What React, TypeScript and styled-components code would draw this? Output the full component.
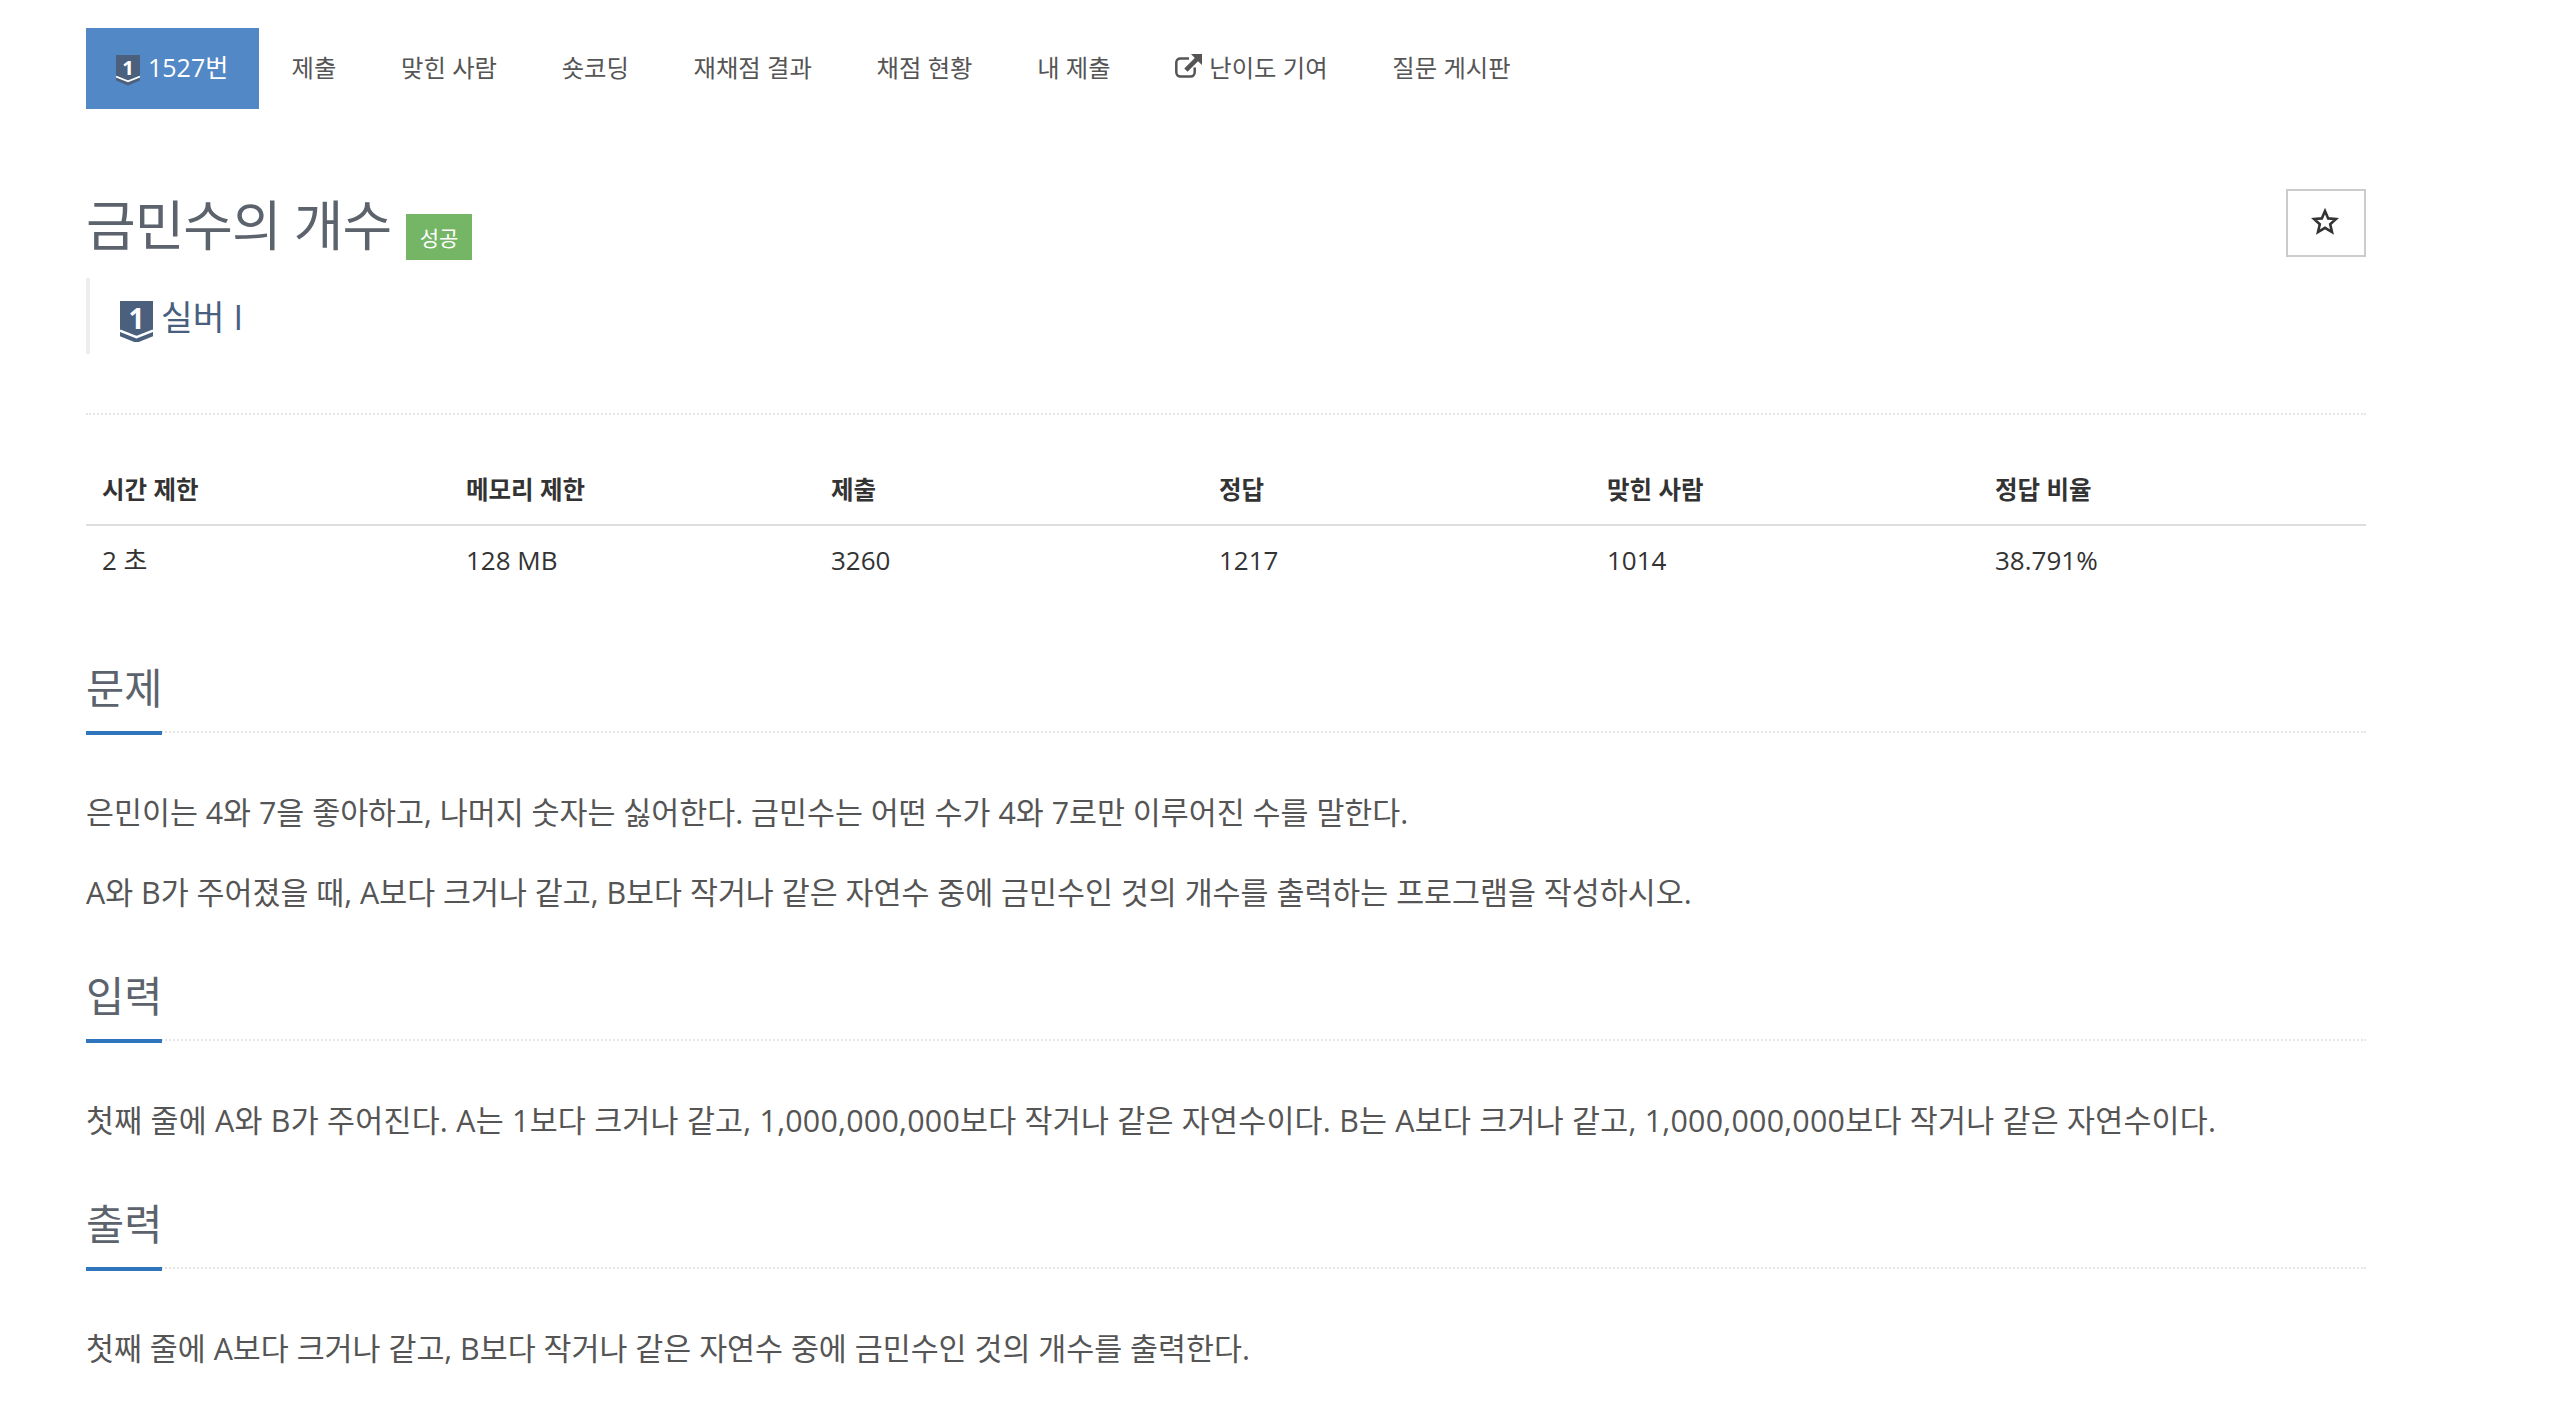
import React from "react";
import styled, { createGlobalStyle } from "styled-components";

const Global = createGlobalStyle`
  html, body { margin: 0; padding: 0; background: #fff; }
  body { font-family: "Open Sans", "Noto Sans CJK KR", sans-serif; color: #555; }
  * { box-sizing: border-box; }
`;

const Page = styled.div`
  width: 2574px;
  height: 1408px;
  overflow: hidden;
  padding: 28px 208px 0 86px;
`;

const Tabs = styled.nav`
  display: flex;
  height: 81px;
  align-items: stretch;
`;

const Tab = styled.a<{ $active?: boolean }>`
  display: flex;
  align-items: center;
  gap: 8px;
  padding: ${(p) => (p.$active ? "0 31px 5px 32px" : "0 32.35px 5px")};
  font-size: ${(p) => (p.$active ? 25 : 24.35)}px;
  color: ${(p) => (p.$active ? "#fff" : "#555")};
  background: ${(p) => (p.$active ? "#5388c6" : "transparent")};
`;

const TitleRow = styled.div`
  display: flex;
  justify-content: space-between;
  align-items: flex-start;
  margin-top: 80px;
`;

const TitleGroup = styled.div`
  display: flex;
  align-items: center;
  gap: 15px;
  height: 72px;
`;

const Title = styled.h1`
  margin: 0;
  font-size: 54px;
  font-weight: 400;
  line-height: 72px;
  letter-spacing: -1px;
  color: #5c636d;
`;

const Badge = styled.span`
  display: flex;
  align-items: center;
  justify-content: center;
  width: 66px;
  height: 46px;
  margin-top: 24px;
  font-size: 21px;
  color: #fff;
  background: #74b566;
`;

const StarButton = styled.button`
  display: flex;
  align-items: center;
  justify-content: center;
  width: 80px;
  height: 68px;
  padding: 0 2px 4px 0;
  background: #fff;
  border: 2px solid #ccc;
`;

const Tier = styled.blockquote`
  display: flex;
  align-items: center;
  gap: 8px;
  height: 76px;
  margin: 17px 0 0;
  padding: 0 0 2px 30px;
  border-left: 4px solid #eee;
  font-size: 34.5px;
  color: #47607f;
`;

const Rule = styled.hr`
  height: 0;
  margin: 59px 0 0;
  border: 0;
  border-top: 2px dotted #e6e6e6;
`;

const Table = styled.div`
  display: grid;
  grid-template-columns: 364px 365px 388px 388px 388px 387px;
  margin-top: 35px;
  color: #333;
`;

const HeadCell = styled.div`
  height: 76px;
  padding: 24px 16px 0;
  font-size: 24.5px;
  font-weight: 700;
  line-height: 32px;
  border-bottom: 2px solid #ddd;
`;

const BodyCell = styled.div`
  height: 72px;
  padding: 18px 16px 0;
  font-size: 26px;
  line-height: 32px;
`;

const Section = styled.section<{ $top: number }>`
  margin-top: ${(p) => p.$top}px;
`;

const SectionHead = styled.div`
  height: 72px;
  border-bottom: 2px dotted #e6e6e6;
`;

const SectionTitle = styled.h2`
  display: inline-block;
  height: 74px;
  margin: 0;
  font-size: 41.5px;
  font-weight: 400;
  line-height: 54px;
  color: #5c636d;
  border-bottom: 4px solid #2f75bd;
`;

const SectionBody = styled.div`
  margin-top: 25px;
`;

const Para = styled.p<{ $track?: number }>`
  margin: 0;
  padding-top: 31px;
  height: 80px;
  font-size: 30.4px;
  line-height: 48px;
  letter-spacing: ${(p) => p.$track ?? 0}px;
  white-space: nowrap;
  color: #555;
`;

const ShieldBox = styled.span<{ $w: number; $top: number; $left: number }>`
  position: relative;
  flex: none;
  display: block;
  width: ${(p) => p.$w}px;
  height: ${(p) => p.$w * 1.27}px;
  margin: ${(p) => p.$top}px 0 0 ${(p) => p.$left}px;
`;

const ShieldArt = styled.svg`
  display: block;
  width: 100%;
  height: 100%;
`;

const ShieldDigit = styled.span<{ $w: number }>`
  position: absolute;
  top: 0;
  left: 0;
  width: 100%;
  font-size: ${(p) => p.$w * 0.85}px;
  font-weight: 700;
  line-height: ${(p) => p.$w * 1.03}px;
  text-align: center;
  color: #fff;
`;

const LinkIcon = styled.svg`
  flex: none;
  width: 27px;
  height: 24px;
  margin-right: -1px;
`;

function Shield({ w, top, left = 0 }: { w: number; top: number; left?: number }) {
  return (
    <ShieldBox $w={w} $top={top} $left={left}>
      <ShieldArt viewBox="0 0 32 40" preserveAspectRatio="none">
        <path d="M0 0H32V33.600L16 40L0 33.600Z" fill="#4a607d" />
        <path d="M0 28.300L16 34.600L32 28.300" fill="none" stroke="#fff" strokeWidth="2.400" />
      </ShieldArt>
      <ShieldDigit $w={w}>1</ShieldDigit>
    </ShieldBox>
  );
}

function Star() {
  return (
    <svg width="28" height="27" viewBox="0 0 28 27">
      <path d="M14 3L17.200 10.400L25 11L19.200 16.200L21 24L14 19.800L7 24L8.800 16.200L3 11L10.800 10.400Z" fill="none" stroke="#333" strokeWidth="2.600" />
    </svg>
  );
}

function ExternalLink() {
  return (
    <LinkIcon viewBox="0 0 27 24">
      <path d="M14 4.500H5.500C3 4.500 1.300 6.200 1.300 8.500V18.300C1.300 20.700 3 22.500 5.500 22.500H15.500C18 22.500 19.700 20.700 19.700 18.300V13.500" fill="none" stroke="#555" strokeWidth="2.500" />
      <path d="M16 0H27V11L23 7.200L12.500 17.700L9.300 14.500L19.800 4Z" fill="#555" />
    </LinkIcon>
  );
}

const heads = ["시간 제한", "메모리 제한", "제출", "정답", "맞힌 사람", "정답 비율"];
const values = ["2 초", "128 MB", "3260", "1217", "1014", "38.791%"];

export default function App() {
  return (
    <Page>
      <Global />
      <Tabs>
        <Tab $active><Shield w={24} top={9} left={-2} />1527번</Tab>
        <Tab>제출</Tab>
        <Tab>맞힌 사람</Tab>
        <Tab>숏코딩</Tab>
        <Tab>재채점 결과</Tab>
        <Tab>채점 현황</Tab>
        <Tab>내 제출</Tab>
        <Tab><ExternalLink />난이도 기여</Tab>
        <Tab>질문 게시판</Tab>
      </Tabs>
      <TitleRow>
        <TitleGroup>
          <Title>금민수의 개수</Title>
          <Badge>성공</Badge>
        </TitleGroup>
        <StarButton aria-label="star"><Star /></StarButton>
      </TitleRow>
      <Tier><Shield w={33} top={13} />실버 I</Tier>
      <Rule />
      <Table>
        {heads.map((h) => <HeadCell key={h}>{h}</HeadCell>)}
        {values.map((v) => <BodyCell key={v}>{v}</BodyCell>)}
      </Table>
      <Section $top={63}>
        <SectionHead><SectionTitle>문제</SectionTitle></SectionHead>
        <SectionBody>
          <Para>은민이는 4와 7을 좋아하고, 나머지 숫자는 싫어한다. 금민수는 어떤 수가 4와 7로만 이루어진 수를 말한다.</Para>
          <Para>A와 B가 주어졌을 때, A보다 크거나 같고, B보다 작거나 같은 자연수 중에 금민수인 것의 개수를 출력하는 프로그램을 작성하시오.</Para>
        </SectionBody>
      </Section>
      <Section $top={51}>
        <SectionHead><SectionTitle>입력</SectionTitle></SectionHead>
        <SectionBody>
          <Para $track={0.24}>첫째 줄에 A와 B가 주어진다. A는 1보다 크거나 같고, 1,000,000,000보다 작거나 같은 자연수이다. B는 A보다 크거나 같고, 1,000,000,000보다 작거나 같은 자연수이다.</Para>
        </SectionBody>
      </Section>
      <Section $top={51}>
        <SectionHead><SectionTitle>출력</SectionTitle></SectionHead>
        <SectionBody>
          <Para>첫째 줄에 A보다 크거나 같고, B보다 작거나 같은 자연수 중에 금민수인 것의 개수를 출력한다.</Para>
        </SectionBody>
      </Section>
    </Page>
  );
}
